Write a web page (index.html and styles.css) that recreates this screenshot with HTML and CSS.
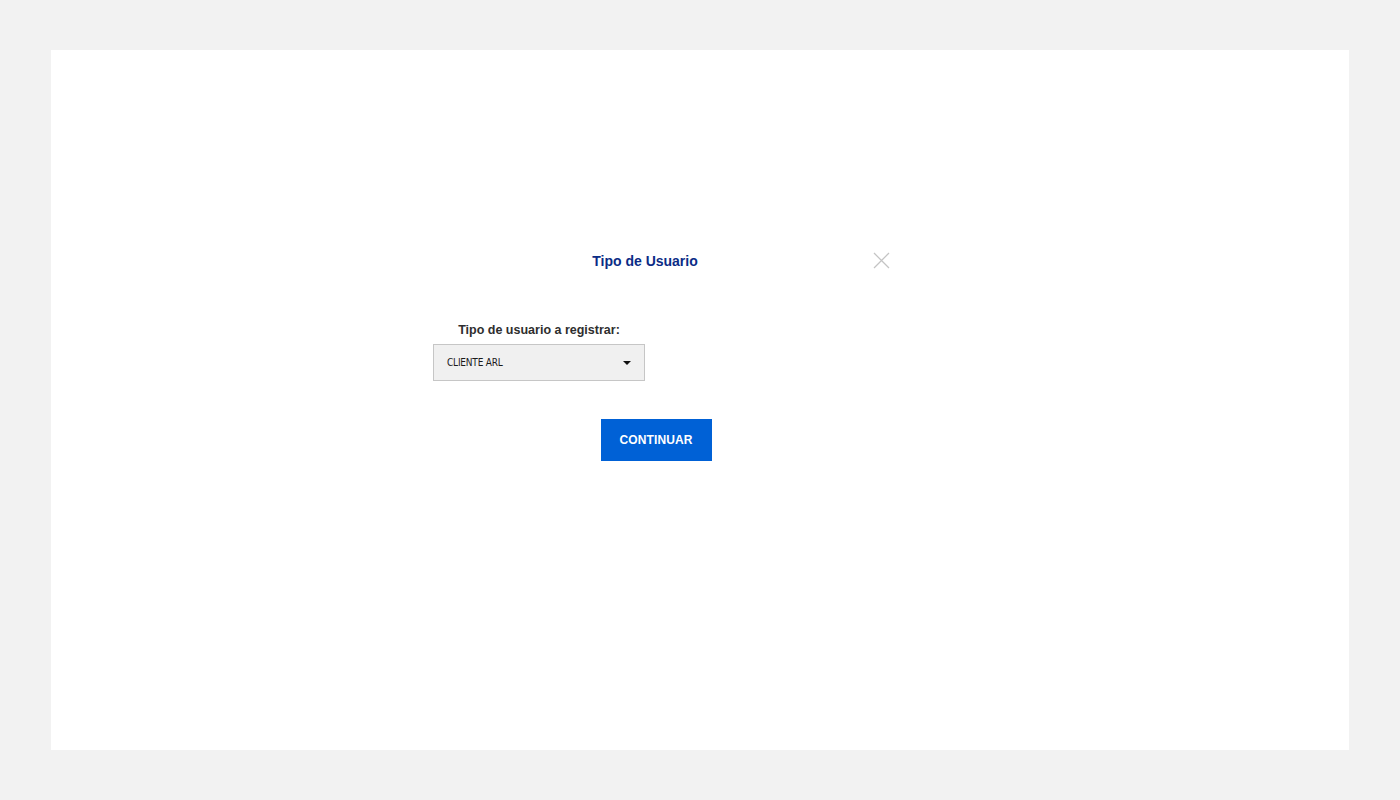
FILE: index.html
```html
<!DOCTYPE html>
<html lang="es">
<head>
<meta charset="utf-8">
<title>Tipo de Usuario</title>
<link rel="stylesheet" href="styles.css">
</head>
<body>
<div class="panel">
  <div class="modal">
    <div class="modal-header">
      <span class="spacer"></span>
      <h2 class="modal-title">Tipo de Usuario</h2>
      <button class="close" aria-label="Cerrar">
        <svg width="17" height="17" viewBox="0 0 17 17"><path d="M1 1 L16 16 M16 1 L1 16" stroke="#c4c4c4" stroke-width="1.3" fill="none"/></svg>
      </button>
    </div>
    <div class="form-group">
      <label class="label">Tipo de usuario a registrar:</label>
      <div class="select">
        <span class="select-value">CLIENTE ARL</span>
        <span class="caret"></span>
      </div>
    </div>
    <div class="actions">
      <button class="btn">CONTINUAR</button>
    </div>
  </div>
</div>
</body>
</html>
```
FILE: styles.css
```css
html, body {
  margin: 0;
  padding: 0;
  background: #f2f2f2;
  font-family: "Liberation Sans", Arial, sans-serif;
}
.panel {
  margin: 50px 51px;
  height: 700px;
  background: #ffffff;
  padding-top: 199px;
  box-sizing: border-box;
}
.modal {
  margin-left: 359px;
  width: 490px;
}
.modal-header {
  display: grid;
  grid-template-columns: 1fr auto 1fr;
  align-items: center;
  height: 24px;
  padding-right: 20px;
}
.modal-title {
  margin: 0;
  font-size: 14px;
  font-weight: bold;
  color: #0b2c86;
  line-height: 24px;
}
.close {
  justify-self: end;
  margin-right: -10px;
  margin-top: -1px;
  border: 0;
  background: none;
  padding: 0;
  width: 17px;
  height: 17px;
  display: flex;
}
.form-group {
  margin-left: 23px;
  width: 212px;
  margin-top: 49px;
  display: flex;
  flex-direction: column;
  align-items: center;
}
.label {
  font-size: 12.5px;
  font-weight: bold;
  color: #2e2e2e;
  line-height: 16px;
  letter-spacing: 0;
  margin-bottom: 6px;
}
.select {
  width: 212px;
  height: 37px;
  box-sizing: border-box;
  border: 1px solid #c6c6c6;
  background: #f0f0f0;
  display: flex;
  align-items: center;
  justify-content: space-between;
  padding: 0 13px 0 13px;
}
.select-value {
  font-family: "Liberation Sans Narrow", "DejaVu Sans Condensed", sans-serif;
  font-size: 10px;
  letter-spacing: -0.2px;
  color: #1a1a1a;
}
.caret {
  width: 0;
  height: 0;
  border-left: 4px solid transparent;
  border-right: 4px solid transparent;
  border-top: 4px solid #111;
}
.actions {
  display: flex;
  justify-content: center;
  margin-top: 38px;
}
.btn {
  width: 111px;
  height: 42px;
  border: 0;
  background: #0061d6;
  color: #ffffff;
  font-family: "Liberation Sans", Arial, sans-serif;
  font-weight: bold;
  font-size: 12px;
  letter-spacing: 0.1px;
  padding: 0;
  margin-left: 2px;
}
```
